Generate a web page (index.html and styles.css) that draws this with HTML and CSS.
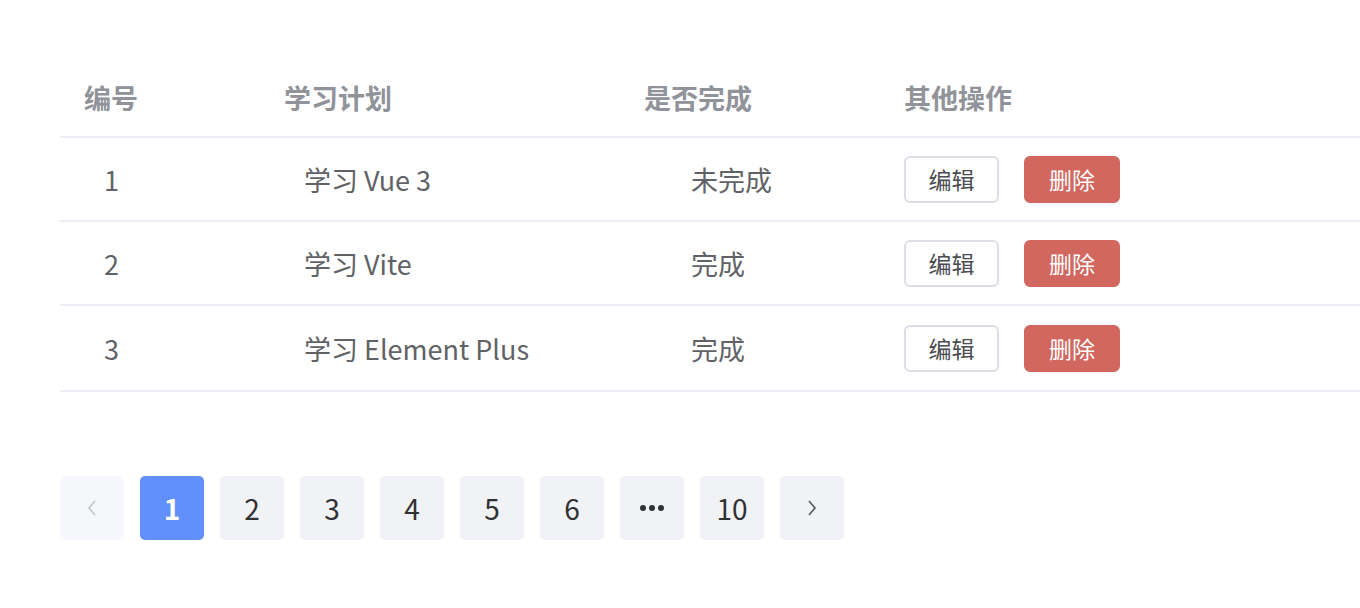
FILE: index.html
```html
<!DOCTYPE html>
<html lang="zh-CN">
<head>
<meta charset="utf-8">
<title>学习计划</title>
<link rel="stylesheet" href="styles.css">
</head>
<body>
<div class="page">
  <table class="plan-table">
    <colgroup>
      <col class="c1"><col class="c2"><col class="c3"><col class="c4">
    </colgroup>
    <thead>
      <tr>
        <th>编号</th>
        <th>学习计划</th>
        <th>是否完成</th>
        <th>其他操作</th>
      </tr>
    </thead>
    <tbody>
      <tr>
        <td class="col-id">1</td>
        <td class="col-name">学习 Vue 3</td>
        <td class="col-done">未完成</td>
        <td class="col-ops"><div class="ops"><button class="btn btn-edit">编辑</button><button class="btn btn-del">删除</button></div></td>
      </tr>
      <tr>
        <td class="col-id">2</td>
        <td class="col-name">学习 Vite</td>
        <td class="col-done">完成</td>
        <td class="col-ops"><div class="ops"><button class="btn btn-edit">编辑</button><button class="btn btn-del">删除</button></div></td>
      </tr>
      <tr class="tall">
        <td class="col-id">3</td>
        <td class="col-name">学习 Element Plus</td>
        <td class="col-done">完成</td>
        <td class="col-ops"><div class="ops"><button class="btn btn-edit">编辑</button><button class="btn btn-del">删除</button></div></td>
      </tr>
    </tbody>
  </table>

  <nav class="pager">
    <button class="pg pg-prev" aria-label="上一页">
      <svg width="12" height="20" viewBox="0 0 12 20"><path d="M9 3 L3 10 L9 17" fill="none" stroke="#c0c4cc" stroke-width="1.6"/></svg>
    </button>
    <button class="pg active">1</button>
    <button class="pg">2</button>
    <button class="pg">3</button>
    <button class="pg">4</button>
    <button class="pg">5</button>
    <button class="pg">6</button>
    <button class="pg" aria-label="更多">
      <svg width="26" height="8" viewBox="0 0 26 8"><circle cx="4" cy="4" r="3" fill="#303133"/><circle cx="13" cy="4" r="3" fill="#303133"/><circle cx="22" cy="4" r="3" fill="#303133"/></svg>
    </button>
    <button class="pg">10</button>
    <button class="pg pg-next" aria-label="下一页">
      <svg width="12" height="20" viewBox="0 0 12 20"><path d="M3 3 L9 10 L3 17" fill="none" stroke="#606266" stroke-width="1.8"/></svg>
    </button>
  </nav>
</div>
</body>
</html>
```

FILE: styles.css
```css
html, body {
  margin: 0;
  padding: 0;
  background: #ffffff;
}

body {
  font-family: "Noto Sans CJK SC", "Liberation Sans", sans-serif;
  color: #606266;
  overflow: hidden;
}

.page {
  padding: 59px 0 0 60px;
}

.plan-table {
  width: 1300px;
  border-collapse: collapse;
  table-layout: fixed;
}

.c1 { width: 200px; }
.c2 { width: 360px; }
.c3 { width: 260px; }
.c4 { width: 480px; }

.plan-table th {
  height: 78px;
  padding: 0 0 0 24px;
  text-align: left;
  font-size: 27px;
  font-weight: 700;
  color: #909399;
  border-bottom: 2px solid #ebeef5;
  box-sizing: border-box;
}

.plan-table td {
  height: 84px;
  padding: 0;
  font-size: 27px;
  color: #606266;
  border-bottom: 2px solid #ebeef5;
  box-sizing: border-box;
}

.plan-table tr.tall td {
  height: 86px;
}

.col-id { padding-left: 44px !important; }
.col-name { padding-left: 44px !important; }
.col-done { padding-left: 71px !important; }
.col-ops { padding-left: 24px !important; }

.ops {
  display: flex;
  gap: 25px;
  align-items: center;
}

.btn {
  height: 47px;
  padding: 0;
  border-radius: 6px;
  font-family: "Noto Sans CJK SC", "Liberation Sans", sans-serif;
  font-size: 23px;
  cursor: pointer;
  box-sizing: border-box;
}

.btn-edit {
  width: 95px;
  background: #ffffff;
  border: 2px solid #dcdfe6;
  color: #4a4c52;
}

.btn-del {
  width: 96px;
  background: #d1675f;
  border: 2px solid #d1675f;
  color: #ffffff;
}

.pager {
  display: flex;
  gap: 16px;
  margin-top: 84px;
}

.pg {
  width: 64px;
  height: 64px;
  padding: 0;
  border: none;
  border-radius: 5px;
  background: #f0f2f5;
  color: #303133;
  font-family: "Noto Sans CJK SC", "Liberation Sans", sans-serif;
  font-size: 28px;
  display: flex;
  align-items: center;
  justify-content: center;
  cursor: pointer;
}

.pg.active {
  background: #6190fa;
  color: #ffffff;
  font-weight: 700;
}

.pg-prev {
  background: #f5f7fa;
}
```
